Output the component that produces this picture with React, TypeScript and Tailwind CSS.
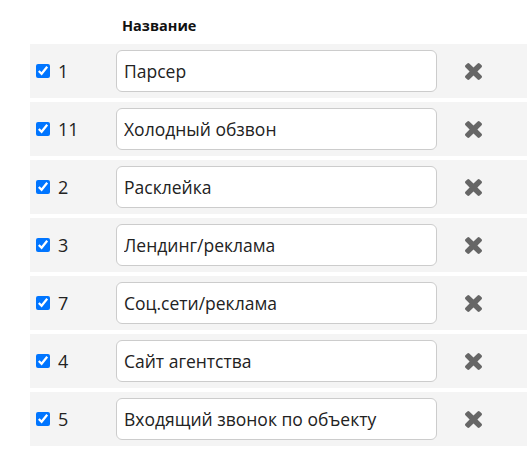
import { useState } from 'react'

interface Source {
  id: number
  name: string
  enabled: boolean
}

const INITIAL: Source[] = [
  { id: 1, name: 'Парсер', enabled: true },
  { id: 11, name: 'Холодный обзвон', enabled: true },
  { id: 2, name: 'Расклейка', enabled: true },
  { id: 3, name: 'Лендинг/реклама', enabled: true },
  { id: 7, name: 'Соц.сети/реклама', enabled: true },
  { id: 4, name: 'Сайт агентства', enabled: true },
  { id: 5, name: 'Входящий звонок по объекту', enabled: true },
]

// thick "times" glyph
function TimesIcon() {
  return (
    <svg viewBox="302 366 1188 1188" className="w-[17px] h-[17px]" fill="#666666">
      <path d="M1490 1322q0 40-28 68l-136 136q-28 28-68 28t-68-28l-294-294-294 294q-28 28-68 28t-68-28l-136-136q-28-28-28-68t28-68l294-294-294-294q-28-28-28-68t28-68l136-136q28-28 68-28t68 28l294 294 294-294q28-28 68-28t68 28l136 136q28 28 28 68t-28 68l-294 294 294 294q28 28 28 68z" />
    </svg>
  )
}

export default function App() {
  const [sources, setSources] = useState<Source[]>(INITIAL)

  const update = (id: number, patch: Partial<Source>) =>
    setSources((prev) => prev.map((s) => (s.id === id ? { ...s, ...patch } : s)))

  return (
    <div className="bg-white min-h-[451px] pl-[30px] font-['Open_Sans',sans-serif] text-[#222]">
      {/* Header */}
      <div className="flex h-[44px]">
        <div className="w-[92px]" />
        <div className="pt-[16px] text-[14.5px] leading-[20px] font-bold text-[#111]">Название</div>
      </div>

      {/* Rows */}
      <div className="flex flex-col gap-[4px]">
        {sources.map((s) => (
          <div key={s.id} className="flex items-center h-[54px] bg-[#f4f4f4]">
            <label className="flex items-center w-[86px] pl-[6px] gap-[8px] text-[18px]">
              <input
                type="checkbox"
                checked={s.enabled}
                onChange={(e) => update(s.id, { enabled: e.target.checked })}
                className="w-[14px] h-[14px] accent-[#0075ff]"
              />
              <span>{s.id}</span>
            </label>
            <input
              type="text"
              value={s.name}
              onChange={(e) => update(s.id, { name: e.target.value })}
              className="w-[321px] h-[42px] px-[7px] bg-white border border-[#cccccc] rounded-[6px] text-[17.5px] text-[#222] outline-none"
            />
            <button
              onClick={() => setSources((prev) => prev.filter((x) => x.id !== s.id))}
              className="ml-[28px] flex items-center justify-center"
            >
              <TimesIcon />
            </button>
          </div>
        ))}
      </div>
    </div>
  )
}
